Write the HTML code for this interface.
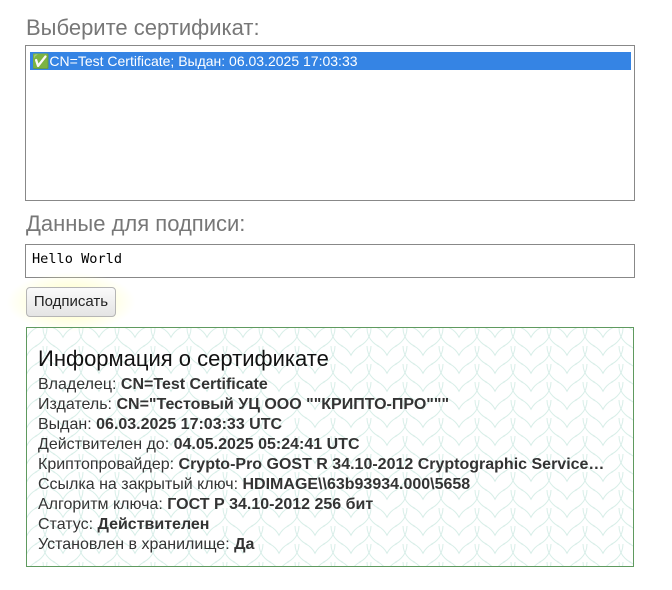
<!DOCTYPE html>
<html><head><meta charset="utf-8"><style>
body{margin:0;width:672px;height:590px;background:#fff;font-family:"Liberation Sans","DejaVu Sans",sans-serif;position:relative;overflow:hidden}
.h{position:absolute;left:26px;font-size:22px;color:#777;margin:0;font-weight:normal}
.sel{position:absolute;left:25px;top:45px;width:608px;height:154px;border:1px solid #888;background:#fff}
.opt{position:absolute;left:4px;top:6px;width:601px;height:18px;background:#3584e4;color:#fff;font-size:14px;line-height:18px;padding-left:2px;box-sizing:border-box}
.ta{position:absolute;left:25px;top:244px;width:608px;height:32px;border:1px solid #888;font-family:"DejaVu Sans Mono","Liberation Mono",monospace;font-size:13.6px;color:#000;box-sizing:content-box}
.ta span{position:absolute;left:6px;top:6px}
.glow{position:absolute;left:6px;top:272px;width:130px;height:60px;border-radius:50%;background:radial-gradient(ellipse at center,rgba(255,255,150,.7) 0%,rgba(255,255,180,.35) 45%,rgba(255,255,255,0) 70%)}
.btn{position:absolute;left:26px;top:287px;width:90px;height:30px;border:1px solid #b5b5b5;border-radius:4px;background:linear-gradient(#fafafa,#e4e4e4);font-size:15px;color:#222;text-align:center;line-height:28px;box-sizing:border-box}
.info{position:absolute;left:26px;top:327px;width:606px;height:238px;border:1px solid #5f9a5f;overflow:hidden}
.info svg{position:absolute;left:0;top:0}
.txt{position:absolute;left:11px;top:18px;color:#333;font-size:16px;line-height:20px}
.txt .t{font-size:22px;color:#111;line-height:25px;margin-bottom:4px}
</style></head><body>
<h2 class="h" style="top:15px">Выберите сертификат:</h2>
<div class="sel"><div class="opt">✅CN=Test Certificate; Выдан: 06.03.2025 17:03:33</div></div>
<h2 class="h" style="top:211px">Данные для подписи:</h2>
<div class="ta"><span>Hello World</span></div>
<div class="glow"></div>
<div class="btn">Подписать</div>
<div class="info">
<svg width="606" height="238"><defs><pattern id="p" width="36" height="18" patternUnits="userSpaceOnUse"><circle cx="18" cy="18" r="20" fill="none" stroke="#d8eee8" stroke-width="1"/><circle cx="0" cy="0" r="20" fill="none" stroke="#d8eee8" stroke-width="1"/><circle cx="36" cy="0" r="20" fill="none" stroke="#d8eee8" stroke-width="1"/></pattern></defs><rect width="606" height="238" fill="url(#p)"/></svg>
<div class="txt">
<div class="t">Информация о сертификате</div>
<div>Владелец: <b>CN=Test Certificate</b></div>
<div>Издатель: <b>CN="Тестовый УЦ ООО ""КРИПТО-ПРО"""</b></div>
<div>Выдан: <b>06.03.2025 17:03:33 UTC</b></div>
<div>Действителен до: <b>04.05.2025 05:24:41 UTC</b></div>
<div>Криптопровайдер: <b>Crypto-Pro GOST R 34.10-2012 Cryptographic Service…</b></div>
<div>Ссылка на закрытый ключ: <b>HDIMAGE\\63b93934.000\5658</b></div>
<div>Алгоритм ключа: <b>ГОСТ Р 34.10-2012 256 бит</b></div>
<div>Статус: <b>Действителен</b></div>
<div>Установлен в хранилище: <b>Да</b></div>
</div></div>
</body></html>
